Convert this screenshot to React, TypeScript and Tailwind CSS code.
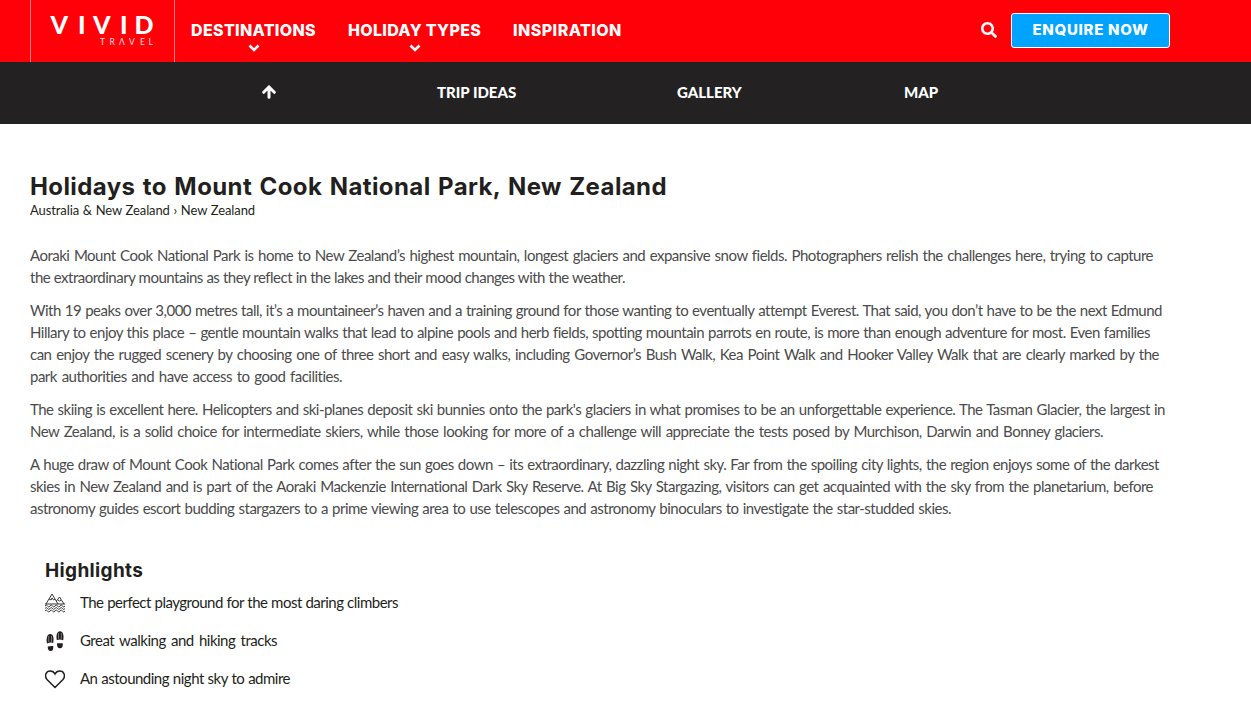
import { FaSearch } from "react-icons/fa";

const paragraphs = [
    [
        { text: "Aoraki Mount Cook National Park is home to New Zealand’s highest mountain, longest glaciers and expansive snow fields. Photographers relish the challenges here, trying to capture", width: "w-[1123px]" },
        { text: "the extraordinary mountains as they reflect in the lakes and their mood changes with the weather.", width: "w-[595px]" },
    ],
    [
        { text: "With 19 peaks over 3,000 metres tall, it’s a mountaineer’s haven and a training ground for those wanting to eventually attempt Everest. That said, you don’t have to be the next Edmund", width: "w-[1132px]" },
        { text: "Hillary to enjoy this place – gentle mountain walks that lead to alpine pools and herb fields, spotting mountain parrots en route, is more than enough adventure for most. Even families", width: "w-[1120px]" },
        { text: "can enjoy the rugged scenery by choosing one of three short and easy walks, including Governor’s Bush Walk, Kea Point Walk and Hooker Valley Walk that are clearly marked by the", width: "w-[1129px]" },
        { text: "park authorities and have access to good facilities.", width: "w-[312px]" },
    ],
    [
        { text: "The skiing is excellent here. Helicopters and ski-planes deposit ski bunnies onto the park's glaciers in what promises to be an unforgettable experience. The Tasman Glacier, the largest in", width: "w-[1135px]" },
        { text: "New Zealand, is a solid choice for intermediate skiers, while those looking for more of a challenge will appreciate the tests posed by Murchison, Darwin and Bonney glaciers.", width: "w-[1073px]" },
    ],
    [
        { text: "A huge draw of Mount Cook National Park comes after the sun goes down – its extraordinary, dazzling night sky. Far from the spoiling city lights, the region enjoys some of the darkest", width: "w-[1129px]" },
        { text: "skies in New Zealand and is part of the Aoraki Mackenzie International Dark Sky Reserve. At Big Sky Stargazing, visitors can get acquainted with the sky from the planetarium, before", width: "w-[1123px]" },
        { text: "astronomy guides escort budding stargazers to a prime viewing area to use telescopes and astronomy binoculars to investigate the star-studded skies.", width: "w-[921px]" },
    ],
];

const Logo = () => (
    <svg width="143" height="62" className="fill-white font-['Lato',sans-serif]">
        <text x="19.5 47 62 89 103.500" y="34" fontSize="25" fontWeight="900">VIVID</text>
        <text x="69 78.5 88 98 109 117.500" y="45" fontSize="8.5" fontWeight="400" opacity="0.85">TRΛVEL</text>
    </svg>
);

const Chevron = () => (
    <svg width="12" height="10" viewBox="0 0 12 10" fill="none" stroke="white" strokeWidth="2.6" className="mt-px">
        <path d="M1.500 2.500L6 7L10.500 2.500" />
    </svg>
);

const ArrowUp = () => (
    <svg width="14" height="14" viewBox="0 0 14 14" fill="none" stroke="white" strokeWidth="3" strokeLinecap="round">
        <path d="M1.700 7.300L7 2L12.300 7.300M7 3V12.200" />
    </svg>
);

const MountainIcon = () => (
    <svg width="20" height="20" viewBox="0 0 20 20" fill="none" stroke="#231f20" strokeWidth="0.9">
        <path d="M1 11L7 1L13 11M4 6l2 1l1-2l1.500 2l1.500-1M11.500 8L14.500 4L19 11M13 7l1.500 1l1.500-1M0 11H20" />
        <path d="M0 13q1.250-2 2.500 0t2.500 0t2.500 0t2.500 0t2.500 0t2.500 0t2.500 0t2.500 0M0 15.500q1.250-2 2.500 0t2.500 0t2.500 0t2.500 0t2.500 0t2.500 0t2.500 0t2.500 0M0 18q1.250-2 2.500 0t2.500 0t2.500 0t2.500 0t2.500 0t2.500 0t2.500 0t2.500 0" />
    </svg>
);

const BootsIcon = () => (
    <svg width="20" height="20" viewBox="0 0 20 20" fill="#231f20">
        <path d="M2 12.500C1 8 2 3 5.200 3s4 4 3 9c-2-1-4-.5-6.200.5zM2.700 15.500q2.500-.7 5.500-.5c.5 3-.5 5-2.500 5s-3-1.500-3-4.500z" />
        <path d="M11.800 9C11 4 12 .200 15 .200s4.200 4 3.200 9c-2-1-4-1-6.400-.2zM12 12.300h5.700c.5 3-.5 5-2.700 5s-3.300-2-3-5z" />
        <path d="M3.700 5.500v5M6.500 5.500v5M13.500 2.500v5M16.300 2.500v5" stroke="white" strokeWidth="0.8" strokeDasharray="1 1" />
    </svg>
);

const HeartIcon = () => (
    <svg width="20" height="20" viewBox="0 0 20 20" fill="none" stroke="#231f20" strokeWidth="1.5">
        <path d="M10 18.500L2 10.500C-1 7 1 2 5.200 2C7.500 2 9 3 10 5C11 3 12.500 2 14.800 2C19 2 21 7 18 10.500z" />
    </svg>
);

const highlights = [
    { text: "The perfect playground for the most daring climbers", icon: <MountainIcon />, width: "w-[318px]" },
    { text: "Great walking and hiking tracks", icon: <BootsIcon />, width: "w-[197px]" },
    { text: "An astounding night sky to admire", icon: <HeartIcon />, width: "w-[210px]" },
];

export default function App() {
    return (
        <div className="h-[718px] overflow-hidden bg-white font-['Lato',sans-serif] text-[#231f20]">
            {/* Top bar */}
            <header className="flex h-[62px] bg-[#ff0009] pl-[30px] font-['Inter',sans-serif] text-base font-extrabold text-white">
                <div className="w-[145px] border-x border-white/50">
                    <Logo />
                </div>
                <nav className="flex gap-8 pt-[18px] pl-4 leading-6 tracking-[0.32px] whitespace-nowrap">
                    <a className="flex w-[125px] flex-col items-center">
                        <span>DESTINATIONS</span>
                        <Chevron />
                    </a>
                    <a className="flex w-[133px] flex-col items-center">
                        <span>HOLIDAY TYPES</span>
                        <Chevron />
                    </a>
                    <a className="w-[109px] tracking-[0.45px]">INSPIRATION</a>
                </nav>
                <div className="mr-[81px] ml-auto flex items-start pt-[13px]">
                    <FaSearch className="mt-[9px] mr-3.5 size-4" />
                    <button className="h-[35px] w-[159px] rounded-[3px] border border-white bg-[#00a4ff] text-[15px] tracking-[0.7px] whitespace-nowrap">ENQUIRE NOW</button>
                </div>
            </header>
            {/* Section links */}
            <nav className="flex h-[62px] items-center gap-[161px] bg-[#242122] pb-0.5 pl-[262px] text-[15px] font-black whitespace-nowrap text-white">
                <ArrowUp />
                <a className="w-[79px]">TRIP IDEAS</a>
                <a className="w-[66px]">GALLERY</a>
                <a>MAP</a>
            </nav>
            <main className="px-[30px] pt-[47px]">
                <h1 className="w-[637px] font-['Inter',sans-serif] text-2xl leading-8 font-bold tracking-[0.4px] whitespace-nowrap [text-align-last:justify]">Holidays to Mount Cook National Park, New Zealand</h1>
                <p className="-mt-px w-[225px] text-[13px] leading-4 tracking-[-0.1px] whitespace-nowrap [text-align-last:justify]">Australia &amp; New Zealand › New Zealand</p>
                <div className="mt-[26px] flex flex-col gap-[11px] text-[15px] leading-[22px] tracking-[-0.5px] text-[#4b4b4b]">
                    {paragraphs.map((lines, i) => (
                        <p key={i}>
                            {lines.map((line) => (
                                <span key={line.text} className={`block whitespace-nowrap [text-align-last:justify] ${line.width}`}>{line.text}</span>
                            ))}
                        </p>
                    ))}
                </div>
                <section className="mt-[38px] pl-[15px]">
                    <h2 className="font-['Inter',sans-serif] text-[19px] leading-7 font-bold tracking-[0.35px]">Highlights</h2>
                    <ul className="mt-[7px] flex flex-col gap-4">
                        {highlights.map((item) => (
                            <li key={item.text} className="flex h-[22px] items-center gap-[15px] text-[15px] tracking-[-0.5px] whitespace-nowrap">
                                {item.icon}
                                <span className={`pb-0.5 [text-align-last:justify] ${item.width}`}>{item.text}</span>
                            </li>
                        ))}
                    </ul>
                </section>
            </main>
        </div>
    );
}
